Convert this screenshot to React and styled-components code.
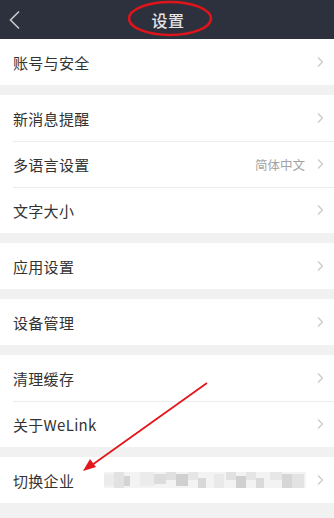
import React from "react";
import styled, { createGlobalStyle } from "styled-components";

const Global = createGlobalStyle`
  html, body { margin: 0; padding: 0; background: #f1f1f1; }
  body { font-family: "Noto Sans CJK SC", "Noto Sans", sans-serif; }
  * { box-sizing: border-box; }
`;

const Page = styled.div`
  position: relative;
  width: 334px;
  height: 518px;
  overflow: hidden;
  background: #f1f1f1;
  display: flex;
  flex-direction: column;
`;

const Header = styled.header`
  height: 39px;
  background: #2d313d;
  display: grid;
  grid-template-columns: 40px 1fr 40px;
  align-items: center;
  flex-shrink: 0;
`;

const BackBtn = styled.div`
  display: flex;
  align-items: center;
  padding-left: 8px;
  height: 100%;
`;

const Title = styled.div`
  text-align: center;
  color: #e4e4e6;
  font-size: 16px;
  font-weight: 500;
  letter-spacing: 0.5px;
  padding-left: 2px;
`;

const Body = styled.div`
  display: flex;
  flex-direction: column;
  gap: 10px;
`;

const Section = styled.section`
  background: #fff;
  display: flex;
  flex-direction: column;
`;

const Row = styled.div`
  position: relative;
  height: 46px;
  display: flex;
  align-items: center;
  padding: 0 10px 0 13px;
  &:not(:first-child)::before {
    content: "";
    position: absolute;
    top: 0;
    left: 13px;
    right: 0;
    height: 1px;
    background: #ececec;
  }
`;

const Label = styled.span`
  flex: 1;
  font-size: 15px;
  color: #333;
  letter-spacing: 0.3px;
`;

const Value = styled.span`
  font-size: 12.5px;
  color: #a3a3a3;
  margin-right: 12px;
`;

const Mosaic = styled.div`
  display: flex;
  margin-right: 11px;
`;

const Chevron = () => (
  <svg width="7" height="12" viewBox="0 0 7 12">
    <path d="M1 1.5 L5.5 6 L1 10.5" fill="none" stroke="#c8c8c8" strokeWidth="1.2" />
  </svg>
);

const BackIcon = () => (
  <svg width="14" height="20" viewBox="0 0 14 20">
    <path d="M11 1.5 L2.5 10 L11 18.5" fill="none" stroke="#c9cad0" strokeWidth="1.6" />
  </svg>
);

const blocks = [
  [0, 4, 10, 12, "#ececec"], [10, 2, 10, 16, "#e2e2e2"], [20, 6, 6, 10, "#d4d4d4"],
  [36, 2, 14, 14, "#ebebeb"], [50, 4, 12, 10, "#dcdcdc"], [62, 2, 10, 8, "#e0e0e0"],
  [72, 4, 12, 12, "#cfcfcf"], [84, 2, 10, 8, "#e6e6e6"], [94, 8, 8, 10, "#d8d8d8"],
  [110, 4, 10, 14, "#e9e9e9"], [122, 2, 10, 8, "#e1e1e1"], [132, 6, 10, 12, "#d0d0d0"],
  [142, 2, 10, 8, "#e5e5e5"], [152, 8, 8, 10, "#dadada"], [166, 2, 12, 8, "#e7e7e7"],
  [178, 4, 10, 14, "#d6d6d6"], [188, 4, 12, 14, "#e3e3e3"],
];

const MosaicImg = () => (
  <svg width="202" height="20" viewBox="0 0 202 20">
    <rect x="0" y="2" width="202" height="16" fill="#f3f3f4" />
    {blocks.map(([x, y, w, h, c], i) => (
      <rect key={i} x={x} y={y} width={w} height={h} fill={c} />
    ))}
  </svg>
);

const Overlay = styled.svg`
  position: absolute;
  left: 0;
  top: 0;
  pointer-events: none;
`;

const sections = [
  [{ label: "账号与安全" }],
  [{ label: "新消息提醒" }, { label: "多语言设置", value: "简体中文" }, { label: "文字大小" }],
  [{ label: "应用设置" }],
  [{ label: "设备管理" }],
  [{ label: "清理缓存" }, { label: "关于WeLink" }],
  [{ label: "切换企业", mosaic: true }],
];

export default function App() {
  return (
    <Page>
      <Global />
      <Header>
        <BackBtn>
          <BackIcon />
        </BackBtn>
        <Title>设置</Title>
        <div />
      </Header>
      <Body>
        {sections.map((rows, si) => (
          <Section key={si}>
            {rows.map((r) => (
              <Row key={r.label}>
                <Label>{r.label}</Label>
                {r.value && <Value>{r.value}</Value>}
                {r.mosaic && (
                  <Mosaic>
                    <MosaicImg />
                  </Mosaic>
                )}
                <Chevron />
              </Row>
            ))}
          </Section>
        ))}
      </Body>
      <Overlay width="334" height="518" viewBox="0 0 334 518">
        <ellipse cx="170" cy="18.5" rx="41" ry="16.5" fill="none" stroke="#e0141a" strokeWidth="2.6" />
        <line x1="207" y1="383" x2="92" y2="465" stroke="#e3161c" strokeWidth="1.8" />
        <path d="M83 471 L90 459 L96 467 Z" fill="#e3161c" />
      </Overlay>
    </Page>
  );
}
